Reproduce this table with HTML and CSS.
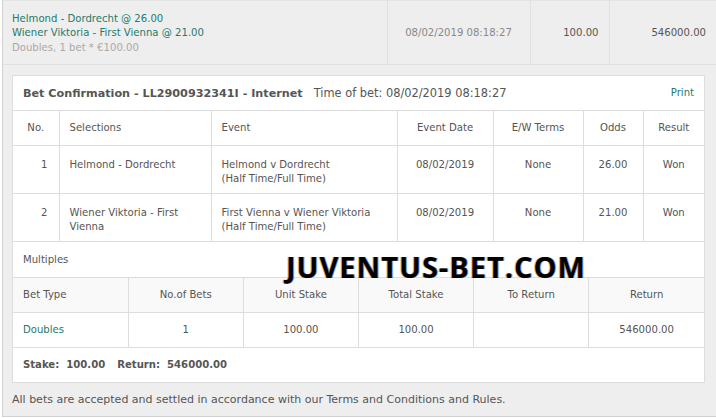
FILE: index.html
```html
<!DOCTYPE html>
<html>
<head>
<meta charset="utf-8">
<link rel="stylesheet" href="styles.css">
</head>
<body>
<div class="wrap">
  <table class="summary">
    <tr>
      <td class="s-sel">
        <div class="teal">Helmond - Dordrecht @ 26.00</div>
        <div class="teal">Wiener Viktoria - First Vienna @ 21.00</div>
        <div class="muted">Doubles, 1 bet * €100.00</div>
      </td>
      <td class="s-date">08/02/2019 08:18:27</td>
      <td class="s-stake">100.00</td>
      <td class="s-ret">546000.00</td>
    </tr>
  </table>
  <div class="inner">
    <div class="panel">
      <div class="p-head">
        <div class="p-title"><b>Bet Confirmation - LL2900932341I - Internet</b><span class="p-time">Time of bet: 08/02/2019 08:18:27</span></div>
        <span class="print">Print</span>
      </div>
      <table class="sel">
        <colgroup>
          <col class="c-no"><col class="c-sel"><col class="c-ev"><col class="c-date"><col class="c-ew"><col class="c-odds"><col class="c-res">
        </colgroup>
        <tr class="head">
          <td class="ctr">No.</td><td>Selections</td><td>Event</td><td class="ctr">Event Date</td><td class="ctr">E/W Terms</td><td class="ctr">Odds</td><td class="ctr">Result</td>
        </tr>
        <tr class="row">
          <td class="num">1</td><td>Helmond - Dordrecht</td><td>Helmond v Dordrecht<br>(Half Time/Full Time)</td><td class="ctr">08/02/2019</td><td class="ctr">None</td><td class="ctr">26.00</td><td class="ctr">Won</td>
        </tr>
        <tr class="row">
          <td class="num">2</td><td>Wiener Viktoria - First Vienna</td><td>First Vienna v Wiener Viktoria<br>(Half Time/Full Time)</td><td class="ctr">08/02/2019</td><td class="ctr">None</td><td class="ctr">21.00</td><td class="ctr">Won</td>
        </tr>
      </table>
      <div class="multiples">Multiples</div>
      <table class="multi">
        <tr class="mhead">
          <td>Bet Type</td><td class="ctr">No.of Bets</td><td class="ctr">Unit Stake</td><td class="ctr">Total Stake</td><td class="ctr">To Return</td><td class="ctr">Return</td>
        </tr>
        <tr class="mrow">
          <td class="teal">Doubles</td><td class="ctr">1</td><td class="ctr">100.00</td><td class="ctr">100.00</td><td class="ctr"></td><td class="ctr">546000.00</td>
        </tr>
      </table>
      <div class="totals"><b>Stake:&nbsp; 100.00</b><b class="ret">Return:&nbsp; 546000.00</b></div>
      <div class="watermark">JUVENTUS-BET.COM</div>
    </div>
    <div class="note">All bets are accepted and settled in accordance with our Terms and Conditions and Rules.</div>
  </div>
</div>
</body>
</html>
```

FILE: styles.css
```css
html, body {
  margin: 0;
  padding: 0;
  background: #ffffff;
}
body {
  font-family: "DejaVu Sans", Verdana, sans-serif;
  font-size: 10.1px;
  color: #555555;
}
.wrap {
  margin-left: 2px;
  width: 714px;
  height: 417px;
  box-sizing: border-box;
  background: #eeeeee;
  border-left: 1px solid #d2d2d2;
  border-bottom: 1px solid #d2d2d2;
  border-top: 1px solid #e4e4e4;
}
.summary {
  width: 100%;
  border-collapse: collapse;
  table-layout: fixed;
}
.summary td {
  height: 63px;
  box-sizing: border-box;
  border-left: 1px solid #e0e0e0;
  border-bottom: 1px solid #e0e0e0;
  padding: 0 10px;
  vertical-align: middle;
}
.summary td.s-sel {
  border-left: none;
  padding: 2px 9px 0 9px;
  line-height: 14.5px;
}
.s-sel { width: 384px; }
.s-date { width: 143px; text-align: center; color: #888888; }
.s-stake { width: 79px; text-align: right; }
.s-ret { text-align: right; }
.teal { color: #1f7b6c; }
.muted { color: #a9a9a9; }
.inner {
  padding: 10px 11px 0 9px;
}
.panel {
  position: relative;
  background: #ffffff;
  border: 1px solid #dddddd;
}
.p-head {
  height: 34px;
  display: flex;
  align-items: center;
  justify-content: space-between;
  padding: 0 10px;
}
.p-title b {
  color: #555555;
  font-size: 11.2px;
}
.p-time {
  margin-left: 11px;
  font-size: 11.4px;
}
.print {
  color: #1f7b6c;
}
table {
  border-collapse: collapse;
  table-layout: fixed;
  width: 100%;
}
.sel td, .multi td {
  border: 1px solid #dddddd;
  padding: 0 10px;
}
.sel tr > td:first-child, .multi tr > td:first-child { border-left: none; }
.sel tr > td:last-child, .multi tr > td:last-child { border-right: none; }
.c-no { width: 46px; }
.c-sel { width: 152px; }
.c-ev { width: 186px; }
.c-date { width: 96px; }
.c-ew { width: 90px; }
.c-odds { width: 60px; }
.ctr { text-align: center; }
.num { text-align: right; padding-right: 11px !important; }
.head td { height: 34px; }
.row td {
  height: 48px;
  box-sizing: border-box;
  vertical-align: top;
  padding-top: 12px;
  line-height: 14px;
}
.multiples {
  height: 35px;
  line-height: 35px;
  padding-left: 10px;
}
.mhead td {
  height: 34px;
  background: #f9f9f9;
}
.mrow td {
  height: 34px;
}
.totals {
  height: 34px;
  display: flex;
  align-items: center;
  padding-left: 10px;
}
.totals .ret { margin-left: 12px; }
.watermark {
  position: absolute;
  left: 273px;
  top: 171px;
  font-family: "Open Sans", sans-serif;
  font-weight: 700;
  font-size: 29px;
  color: #000000;
  letter-spacing: 1px;
  text-shadow: -1px 0 rgba(190, 110, 0, 0.5), 1px 0 rgba(20, 60, 170, 0.5);
  white-space: nowrap;
}
.note {
  height: 34px;
  line-height: 34px;
  font-size: 11px;
}
```
